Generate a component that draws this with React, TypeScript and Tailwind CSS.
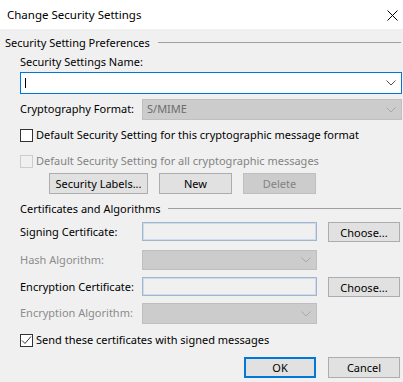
import React from "react";

const Chevron: React.FC<{ disabled?: boolean }> = ({ disabled }) => (
  <svg width="10" height="6" viewBox="0 0 10 6" className="shrink-0">
    <polyline
      points="0.5,0.5 5,5 9.5,0.5"
      fill="none"
      stroke={disabled ? "#a8a8a8" : "#505050"}
      strokeWidth="1"
    />
  </svg>
);

const Btn: React.FC<{ label: string; w: string; disabled?: boolean; primary?: boolean }> = ({ label, w, disabled, primary }) => (
  <button
    className={
      "flex items-center justify-center text-[11px] leading-none whitespace-nowrap " +
      w +
      (disabled
        ? " bg-[#cccccc] border border-[#bfbfbf] text-[#838383]"
        : primary
        ? " bg-[#e1e1e1] border-2 border-[#0078d7] text-black"
        : " bg-[#e1e1e1] border border-[#adadad] text-black")
    }
  >
    {label}
  </button>
);

const ReadonlyField: React.FC = () => (
  <div className="w-[175px] h-[19px] shrink-0 bg-[#f0f0f0] border border-[#a5b4c6] shadow-[inset_0_0_0_1px_#c9dcf1]" />
);

const DisabledSelect: React.FC<{ w: string; h: string; text?: string }> = ({ w, h, text }) => (
  <div className={"flex items-center justify-between bg-[#cccccc] border border-[#bfbfbf] pl-[4px] pr-[5px] " + w + " " + h}>
    <span className="text-[11px] text-[#6d6d6d]">{text}</span>
    <Chevron disabled />
  </div>
);

const GroupHeader: React.FC<{ title: string; mt: string; pl: string }> = ({ title, mt, pl }) => (
  <div className={"flex items-center h-[16px] pr-[2px] " + mt + " " + pl}>
    <span className="whitespace-nowrap">{title}</span>
    <div className="flex-1 h-px bg-[#a0a0a0] ml-[8px] mt-[-1px]" />
  </div>
);

const App: React.FC = () => {
  return (
    <div className="w-[403px] h-[382px] bg-[#f0f0f0] overflow-hidden font-['Noto_Sans',sans-serif] text-[11px] text-black">
      {/* barra de titulo */}
      <div className="h-[29px] bg-white flex items-center justify-between pl-[7px] pr-[5px]">
        <span className="text-[11.5px]">Change Security Settings</span>
        <svg width="11" height="11" viewBox="0 0 11 11" className="mt-[2px]">
          <path d="M0.5 0.5 L10.5 10.5 M10.5 0.5 L0.5 10.5" stroke="#000" strokeWidth="1" />
        </svg>
      </div>

      <GroupHeader title="Security Setting Preferences" mt="mt-[6px]" pl="pl-[5px]" />

      <div className="pl-[20px] pr-[1px]">
        <div className="h-[16px] mt-[3px] flex items-center">Security Settings Name:</div>

        {/* combo editable */}
        <div className="mt-[2px] h-[22px] bg-white border border-[#0078d7] flex items-center justify-between pl-[4px] pr-[5px]">
          <div className="w-px h-[10px] bg-black" />
          <Chevron />
        </div>

        <div className="mt-[5px] h-[21px] flex items-center">
          <span className="w-[122px] shrink-0 whitespace-nowrap">Cryptography Format:</span>
          <DisabledSelect w="flex-1" h="h-[21px]" text="S/MIME" />
        </div>

        <div className="mt-[7px] h-[16px] flex items-center whitespace-nowrap">
          <div className="w-[13px] h-[13px] shrink-0 bg-white border border-[#333333]" />
          <span className="ml-[3px]">Default Security Setting for this cryptographic message format</span>
        </div>

        <div className="mt-[10px] h-[16px] flex items-center whitespace-nowrap">
          <div className="w-[13px] h-[13px] shrink-0 bg-[#f0f0f0] border border-[#cccccc]" />
          <span className="ml-[3px] text-[#838383]">Default Security Setting for all cryptographic messages</span>
        </div>

        <div className="mt-[4px] h-[21px] flex pl-[29px] gap-[11px]">
          <Btn label="Security Labels..." w="w-[99px]" />
          <Btn label="New" w="w-[73px]" />
          <Btn label="Delete" w="w-[73px]" disabled />
        </div>
      </div>

      <GroupHeader title="Certificates and Algorithms" mt="mt-[7px]" pl="pl-[20px]" />

      <div className="pl-[20px]">
        <div className="mt-[5px] h-[20px] flex items-start">
          <span className="w-[122px] shrink-0 whitespace-nowrap h-[20px] flex items-center">Signing Certificate:</span>
          <ReadonlyField />
          <div className="ml-[11px] h-[20px] flex">
            <Btn label="Choose..." w="w-[72px]" />
          </div>
        </div>

        <div className="mt-[8px] h-[20px] flex items-center">
          <span className="w-[122px] shrink-0 whitespace-nowrap text-[#8c8c8c]">Hash Algorithm:</span>
          <DisabledSelect w="w-[175px]" h="h-[20px]" />
        </div>

        <div className="mt-[7px] h-[20px] flex items-start">
          <span className="w-[122px] shrink-0 whitespace-nowrap h-[20px] flex items-center">Encryption Certificate:</span>
          <ReadonlyField />
          <div className="ml-[11px] h-[20px] flex">
            <Btn label="Choose..." w="w-[72px]" />
          </div>
        </div>

        <div className="mt-[6px] h-[21px] flex items-center">
          <span className="w-[122px] shrink-0 whitespace-nowrap text-[#8c8c8c]">Encryption Algorithm:</span>
          <DisabledSelect w="w-[175px]" h="h-[21px]" />
        </div>

        <div className="mt-[8px] h-[16px] flex items-center whitespace-nowrap">
          <div className="w-[13px] h-[13px] shrink-0 bg-white border border-[#333333] flex items-center justify-center">
            <svg width="11" height="11" viewBox="0 0 11 11">
              <polyline points="1,5.5 4,8.5 10,1.5" fill="none" stroke="#333" strokeWidth="1" />
            </svg>
          </div>
          <span className="ml-[3px]">Send these certificates with signed messages</span>
        </div>

        <div className="mt-[9px] h-[21px] flex pl-[224px] gap-[12px]">
          <Btn label="OK" w="w-[72px]" primary />
          <Btn label="Cancel" w="w-[72px]" />
        </div>
      </div>
    </div>
  );
};

export default App;
